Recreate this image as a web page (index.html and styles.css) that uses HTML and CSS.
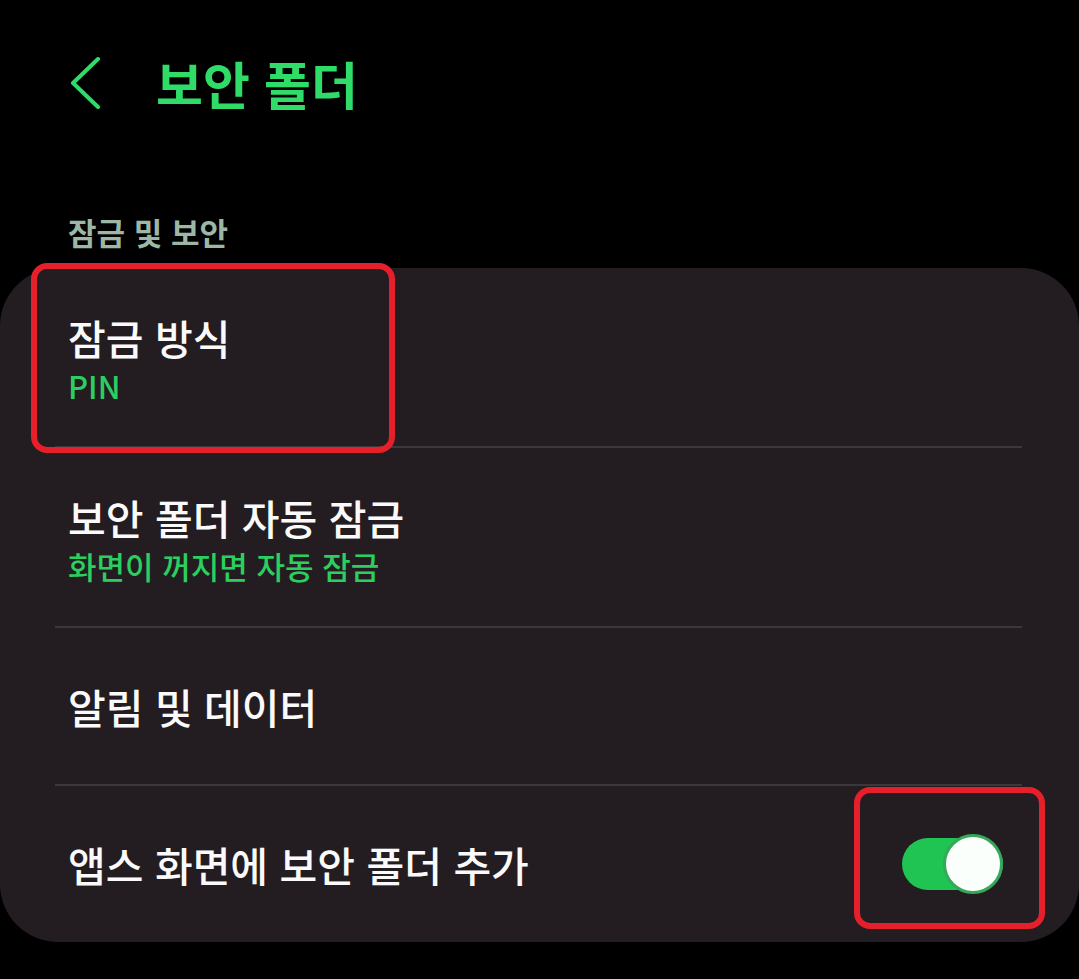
FILE: index.html
```html
<!DOCTYPE html>
<html lang="ko">
<head>
<meta charset="utf-8">
<title>보안 폴더</title>
<link rel="stylesheet" href="styles.css">
</head>
<body>
<div class="screen">
  <header class="appbar">
    <svg class="back" width="32" height="52" viewBox="0 0 32 52" aria-hidden="true">
      <polyline points="28,2 3,26 28,50" fill="none" stroke="#2fdc68" stroke-width="4" stroke-linecap="round" stroke-linejoin="round"/>
    </svg>
    <h1 class="title">보안 폴더</h1>
  </header>

  <div class="section-label">잠금 및 보안</div>

  <section class="card">
    <div class="row two-line">
      <div class="row-title">잠금 방식</div>
      <div class="row-sub">PIN</div>
      <div class="mark mark-lock"></div>
    </div>
    <div class="divider"></div>
    <div class="row two-line">
      <div class="row-title">보안 폴더 자동 잠금</div>
      <div class="row-sub">화면이 꺼지면 자동 잠금</div>
    </div>
    <div class="divider"></div>
    <div class="row one-line">
      <div class="row-title">알림 및 데이터</div>
    </div>
    <div class="divider"></div>
    <div class="row one-line switch-row">
      <div class="row-title">앱스 화면에 보안 폴더 추가</div>
      <div class="toggle"><span class="thumb"></span></div>
      <div class="mark mark-toggle"></div>
    </div>
  </section>
</div>
</body>
</html>
```

FILE: styles.css
```css
* { box-sizing: border-box; }
html, body {
  margin: 0;
  padding: 0;
  background: #000;
}
body {
  font-family: "Noto Sans CJK KR", "Noto Sans", sans-serif;
  color: #fff;
  width: 1079px;
  height: 979px;
  overflow: hidden;
}
.screen {
  position: relative;
  width: 1079px;
}
.appbar {
  display: flex;
  align-items: center;
  height: 166px;
  padding-left: 70px;
}
.back {
  display: block;
  margin-right: 54px;
}
.title {
  margin: 0;
  font-size: 51px;
  font-weight: 700;
  line-height: 56px;
  color: #2fdc68;
  letter-spacing: 0;
}
.section-label {
  margin: 46px 0 16px 68px;
  height: 40px;
  line-height: 40px;
  font-size: 31px;
  font-weight: 700;
  color: #9db7a6;
}
.card {
  background: #231d22;
  border-radius: 58px;
  width: 1079px;
}
.row {
  position: relative;
  padding-left: 68px;
  padding-right: 57px;
}
.two-line {
  padding-top: 46px;
  padding-bottom: 42px;
}
.one-line {
  display: flex;
  align-items: center;
  height: 156px;
}
.row-title {
  font-size: 41px;
  font-weight: 500;
  line-height: 46px;
  color: #fafafa;
}
.row-sub {
  margin-top: 8px;
  font-size: 31px;
  font-weight: 500;
  line-height: 36px;
  color: #2bcf5f;
}
.divider {
  height: 2px;
  background: #3d373c;
  margin: 0 57px 0 55px;
}
.switch-row {
  justify-content: space-between;
  padding-right: 76px;
}
.toggle {
  position: relative;
  width: 101px;
  height: 52px;
  border-radius: 26px;
  background: #1fc452;
}
.thumb {
  position: absolute;
  right: 0;
  top: -4px;
  width: 60px;
  height: 60px;
  border-radius: 50%;
  background: #fbfffc;
  border: 3px solid #35a85a;
}
.mark {
  position: absolute;
  border: 6px solid #e6202b;
  border-radius: 16px;
  pointer-events: none;
}
.mark-lock {
  left: 31px;
  top: -5px;
  width: 364px;
  height: 190px;
}
.mark-toggle {
  left: 854px;
  top: 1px;
  width: 191px;
  height: 142px;
}
```
